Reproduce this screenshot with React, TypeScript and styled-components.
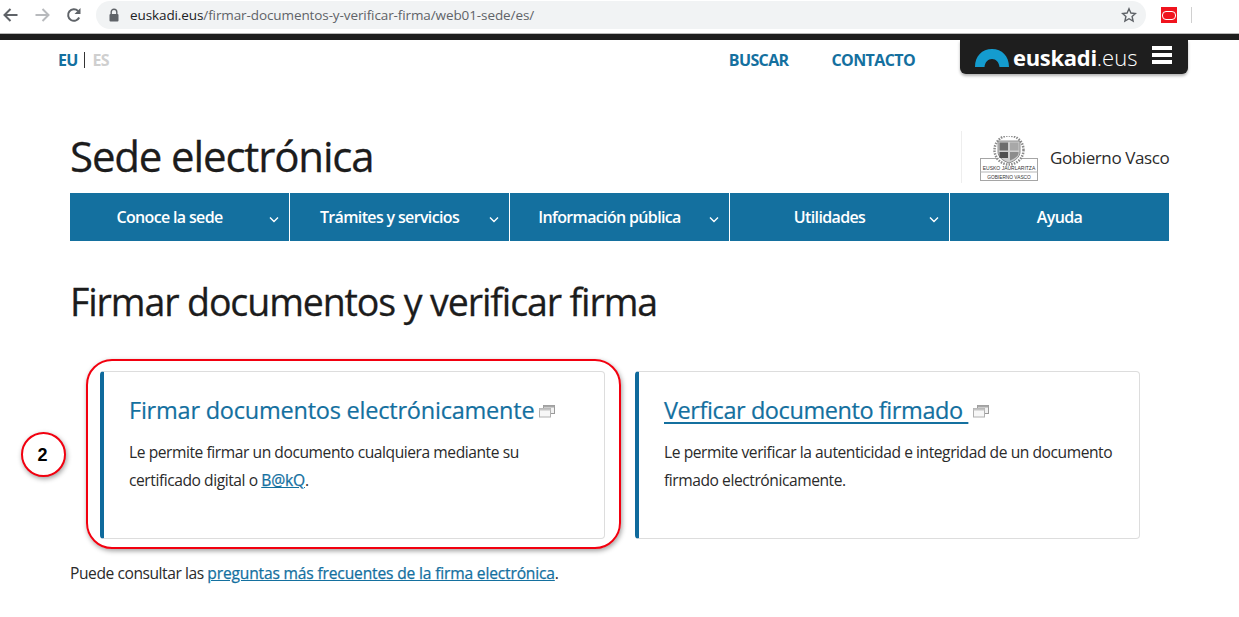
import React from "react";
import styled, { createGlobalStyle } from "styled-components";

const Global = createGlobalStyle`
  html, body { margin: 0; padding: 0; background: #fff; }
  body { font-family: "Open Sans", "Liberation Sans", sans-serif; color: #1c1c1c; overflow: hidden; }
  * { box-sizing: border-box; }
`;

const Page = styled.div`
  width: 1239px;
  height: 617px;
  overflow: hidden;
`;

/* browser chrome */
const Chrome = styled.div`
  height: 34px;
  display: flex;
  align-items: flex-start;
  padding-top: 1px;
  border-bottom: 1px solid #b9b9b9;
`;
const NavIcons = styled.div`
  width: 96px;
  height: 28px;
  display: flex;
  align-items: center;
  gap: 15px;
  padding-left: 2px;
`;
const UrlPill = styled.div`
  width: 1050px;
  height: 28px;
  background: #f1f3f4;
  border-radius: 14px;
  display: flex;
  align-items: center;
  padding: 0 9px 0 12px;
`;
const Lock = styled.svg`
  width: 12px;
  height: 14px;
  margin-right: 10px;
`;
const Url = styled.div`
  flex: 1;
  font-size: 13.5px;
  letter-spacing: -0.1px;
  color: #5f6368;
  white-space: nowrap;
  b { font-weight: 400; color: #202124; }
`;
const Extensions = styled.div`
  flex: 1;
  height: 28px;
  display: flex;
  align-items: center;
  padding-left: 15px;
`;
const OracleBadge = styled.div`
  width: 16px;
  height: 16px;
  background: #f0141e;
  display: flex;
  align-items: center;
  justify-content: center;
  &::after {
    content: "";
    width: 12px;
    height: 7px;
    border: 1.5px solid #fff;
    border-radius: 4px;
  }
`;
const ExtDivider = styled.div`
  width: 1px;
  height: 16px;
  background: #d0d0d0;
  margin-left: 14px;
`;
const BlackBar = styled.div`
  height: 6px;
  background: #1e1e1e;
`;

/* top strip */
const TopStrip = styled.div`
  height: 40px;
  position: relative;
  display: flex;
  align-items: flex-start;
  padding: 0 51px 0 58px;
`;
const Lang = styled.div`
  display: flex;
  align-items: center;
  height: 16px;
  margin-top: 12px;
  font-size: 16px;
  font-weight: 700;
  letter-spacing: -0.8px;
`;
const LangItem = styled.span<{ $off?: boolean }>`
  color: ${(p) => (p.$off ? "#cfcfcf" : "#14709f")};
`;
const LangSep = styled.span`
  width: 1px;
  height: 16px;
  background: #333;
  margin: 0 7px;
`;
const TopLinks = styled.div`
  margin-left: auto;
  margin-top: 9px;
  display: flex;
  gap: 43px;
  font-size: 16px;
  font-weight: 700;
  letter-spacing: -0.62px;
  color: #14709f;
  margin-right: 45px;
  line-height: 22px;
`;
const LogoTab = styled.div`
  width: 228px;
  height: 34px;
  background: #1e1e1e;
  border-radius: 0 0 6px 6px;
  box-shadow: 0 2px 3px rgba(0, 0, 0, 0.3);
  display: flex;
  align-items: center;
  padding-left: 15px;
`;
const LogoArch = styled.svg`
  width: 34px;
  height: 18px;
  margin-right: 4px;
  margin-top: 1px;
`;
const LogoText = styled.div`
  font-size: 22px;
  font-weight: 700;
  color: #fff;
  letter-spacing: -0.3px;
  line-height: 34px;
  span { font-weight: 300; letter-spacing: 0; }
`;
const Burger = styled.div`
  width: 20px;
  height: 18px;
  margin-left: 15px;
  margin-top: -4px;
  background: linear-gradient(#fff 0 4px, transparent 4px 7px, #fff 7px 11px, transparent 11px 14px, #fff 14px 18px);
`;

/* site header */
const Wrap = styled.div`
  width: 1099px;
  margin-left: 70px;
`;
const Masthead = styled.div`
  height: 113px;
  display: flex;
  align-items: flex-start;
  justify-content: space-between;
  padding-top: 49px;
`;
const SiteTitle = styled.h2`
  margin: 0;
  font-size: 42px;
  line-height: 54px;
  font-weight: 500;
  letter-spacing: -1.15px;
  -webkit-text-stroke: 0.3px #1c1c1c;
  color: #1c1c1c;
  white-space: nowrap;
`;
const Gov = styled.div`
  display: flex;
  align-items: center;
  flex: none;
  width: 208px;
  height: 52px;
  margin-top: 2px;
  border-left: 1px solid #eee;
  padding-left: 18px;
`;
const Crest = styled.svg`
  flex: none;
  width: 58px;
  height: 45px;
  margin-right: 12px;
  margin-top: 3px;
`;
const GovName = styled.div`
  flex: none;
  font-size: 17px;
  letter-spacing: -0.4px;
  color: #2b2b2b;
  white-space: nowrap;
`;
const MainNav = styled.nav`
  display: grid;
  grid-template-columns: repeat(5, 220px);
  width: 1099px;
  height: 48px;
  background: #14709f;
`;
const NavItem = styled.div<{ $last?: boolean }>`
  position: relative;
  display: flex;
  align-items: center;
  justify-content: center;
  padding-right: ${(p) => (p.$last ? "1px" : "20px")};
  padding-bottom: 1px;
  border-right: ${(p) => (p.$last ? "none" : "1px solid #fff")};
  font-size: 16px;
  font-weight: 600;
  letter-spacing: -0.65px;
  color: #fff;
`;
const Caret = styled.svg`
  position: absolute;
  right: 10px;
  top: 23px;
  width: 10px;
  height: 7px;
`;
const PageTitle = styled.h1`
  margin: 33px 0 0;
  font-size: 37.5px;
  line-height: 56px;
  font-weight: 500;
  letter-spacing: -1.1px;
  -webkit-text-stroke: 0.3px #1c1c1c;
  color: #1c1c1c;
  white-space: nowrap;
`;

/* cards */
const Cards = styled.div`
  display: flex;
  gap: 30px;
  margin: 41px 0 0 30px;
  width: 1040px;
`;
const Card = styled.article`
  position: relative;
  width: 505px;
  height: 168px;
  background: #fff;
  border: 1px solid #ddd;
  border-left: 4px solid #0f6a9c;
  border-radius: 4px;
  padding: 22px 25px 0;
`;
const CardTitle = styled.h3`
  margin: 0 0 11px;
  font-size: 23.5px;
  line-height: 33px;
  font-weight: 500;
  letter-spacing: -0.22px;
  -webkit-text-stroke: 0.2px #14709f;
  color: #14709f;
  white-space: nowrap;
  display: flex;
  align-items: center;
`;
const Under = styled.span`
  letter-spacing: -0.42px;
  text-decoration: underline;
  text-decoration-thickness: 2px;
  text-underline-offset: 3px;
  white-space: pre;
`;
const WinIcon = styled.svg`
  width: 16px;
  height: 14px;
  margin-left: 5px;
  margin-top: 1px;
`;
const CardText = styled.p`
  margin: 0;
  font-size: 15.6px;
  line-height: 28px;
  letter-spacing: -0.44px;
  color: #2a2a2a;
`;
const CardLink = styled.a`
  color: #14709f;
  text-decoration: underline;
  font-weight: 500;
  letter-spacing: -0.17px;
  -webkit-text-stroke: 0.25px #14709f;
`;
const Footnote = styled.p`
  margin: 20px 0 0;
  font-size: 15.6px;
  line-height: 28px;
  letter-spacing: -0.44px;
  color: #2a2a2a;
`;

/* annotation overlays */
const Ring = styled.div`
  position: absolute;
  left: -18px;
  top: -13px;
  width: 535px;
  height: 190px;
  border: 2px solid #f2000f;
  border-radius: 26px;
  box-shadow: 1px 2px 5px rgba(0, 0, 0, 0.38);
  pointer-events: none;
`;
const Bubble = styled.div`
  position: absolute;
  left: -83px;
  top: 60px;
  width: 45px;
  height: 45px;
  border: 2px solid #f2000f;
  border-radius: 50%;
  background: #fff;
  box-shadow: 1px 2px 5px rgba(0, 0, 0, 0.38);
  display: flex;
  align-items: center;
  justify-content: center;
  padding: 2px 2px 0 0;
  font-family: "Liberation Sans", Arial, sans-serif;
  font-size: 18px;
  font-weight: 700;
  color: #000;
`;

const Win = () => (
  <WinIcon viewBox="0 0 16 14">
    <rect x="4.5" y="1.5" width="11" height="8" fill="#f2f2f2" stroke="#9a9a9a" />
    <rect x="4.5" y="1.5" width="11" height="2" fill="#a8a8a8" />
    <rect x="0.5" y="4.5" width="11" height="8.5" fill="#f7f7f7" stroke="#b0b0b0" />
    <rect x="0.5" y="4.5" width="11" height="2" fill="#c4c4c4" />
  </WinIcon>
);

const Chevron = () => (
  <Caret viewBox="0 0 10 7">
    <path d="M1 1.5 L5 5.5 L9 1.5" fill="none" stroke="#fff" strokeWidth="1.4" />
  </Caret>
);

export default function App() {
  return (
    <Page>
      <Global />
      <Chrome>
        <NavIcons>
          <svg width="17" height="16" viewBox="0 0 17 16">
            <path d="M15.5 8H3M8.500 2 2.500 8l6 6" fill="none" stroke="#5f6368" strokeWidth="2" />
          </svg>
          <svg width="17" height="16" viewBox="0 0 17 16">
            <path d="M1.500 8H14M8.500 2l6 6-6 6" fill="none" stroke="#b8babd" strokeWidth="2" />
          </svg>
          <svg width="16" height="16" viewBox="0 0 16 16">
            <path d="M13.200 10.500A5.800 5.800 0 1 1 12 3.900" fill="none" stroke="#5f6368" strokeWidth="2" />
            <path d="M14.500 1v6h-6z" fill="#5f6368" />
          </svg>
        </NavIcons>
        <UrlPill>
          <Lock viewBox="0 0 12 14">
            <path d="M3.200 6V4a2.800 2.800 0 0 1 5.600 0v2" fill="none" stroke="#5f6368" strokeWidth="1.4" />
            <rect x="1.500" y="6" width="9" height="7.500" rx="1" fill="#5f6368" />
          </Lock>
          <Url>
            <b>euskadi.eus</b>/firmar-documentos-y-verificar-firma/web01-sede/es/
          </Url>
          <svg width="16" height="16" viewBox="0 0 16 16">
            <path
              d="M8 1.800 9.900 6l4.600.5-3.400 3 1 4.500L8 11.700 3.900 14l1-4.500-3.400-3L6.100 6z"
              fill="none"
              stroke="#5f6368"
              strokeWidth="1.4"
            />
          </svg>
        </UrlPill>
        <Extensions>
          <OracleBadge />
          <ExtDivider />
        </Extensions>
      </Chrome>
      <BlackBar />
      <TopStrip>
        <Lang>
          <LangItem>EU</LangItem>
          <LangSep />
          <LangItem $off>ES</LangItem>
        </Lang>
        <TopLinks>
          <span>BUSCAR</span>
          <span>CONTACTO</span>
        </TopLinks>
        <LogoTab>
          <LogoArch viewBox="0 0 34 18">
            <path d="M0 18C0 7 7 0 17 0s17 7 17 18H24.500C24 13 21 10 17 10s-7 3-7.500 8z" fill="#149ccf" />
          </LogoArch>
          <LogoText>
            euskadi<span>.eus</span>
          </LogoText>
          <Burger />
        </LogoTab>
      </TopStrip>
      <Wrap>
        <Masthead>
          <SiteTitle>Sede electrónica</SiteTitle>
          <Gov>
            <Crest viewBox="0 0 58 45">
              <rect x="0.500" y="22.500" width="57" height="22" fill="#fff" stroke="#a5a5a5" />
              <line x1="0" y1="36" x2="58" y2="36" stroke="#b5b5b5" />
              <circle cx="29" cy="14" r="14.500" fill="#fff" stroke="#8a8a8a" strokeWidth="2.500" strokeDasharray="1.500 1.200" />
              <path d="M18 5h22v11c0 5-5 9-11 11-6-2-11-6-11-11z" fill="#cfcfcf" stroke="#777" strokeWidth="0.800" />
              <rect x="19.500" y="6.500" width="8.500" height="8" fill="#6c6c6c" />
              <rect x="30" y="6.500" width="8.500" height="8" fill="#a8a8a8" />
              <rect x="19.500" y="16" width="8.500" height="6" fill="#4f4f4f" />
              <path d="M30 16h8.500v1c0 3-3.500 5.500-8.500 7.500z" fill="#8c8c8c" />
              <text x="29" y="33.500" textAnchor="middle" fontSize="5" fill="#333" fontFamily="Liberation Sans">EUSKO JAURLARITZA</text>
              <text x="29" y="42.500" textAnchor="middle" fontSize="4.800" fill="#333" fontFamily="Liberation Sans">GOBIERNO VASCO</text>
            </Crest>
            <GovName>Gobierno Vasco</GovName>
          </Gov>
        </Masthead>
        <MainNav>
          <NavItem>Conoce la sede<Chevron /></NavItem>
          <NavItem>Trámites y servicios<Chevron /></NavItem>
          <NavItem>Información pública<Chevron /></NavItem>
          <NavItem>Utilidades<Chevron /></NavItem>
          <NavItem $last>Ayuda</NavItem>
        </MainNav>
        <PageTitle>Firmar documentos y verificar firma</PageTitle>
        <Cards>
          <Card>
            <Ring />
            <Bubble>2</Bubble>
            <CardTitle>
              <span>Firmar documentos electrónicamente</span>
              <Win />
            </CardTitle>
            <CardText>
              Le permite firmar un documento cualquiera mediante su certificado digital o{" "}
              <CardLink>B@kQ</CardLink>.
            </CardText>
          </Card>
          <Card>
            <CardTitle>
              <Under>Verficar documento firmado </Under>
              <Win />
            </CardTitle>
            <CardText>
              Le permite verificar la autenticidad e integridad de un documento firmado electrónicamente.
            </CardText>
          </Card>
        </Cards>
        <Footnote>
          Puede consultar las <CardLink>preguntas más frecuentes de la firma electrónica</CardLink>.
        </Footnote>
      </Wrap>
    </Page>
  );
}
